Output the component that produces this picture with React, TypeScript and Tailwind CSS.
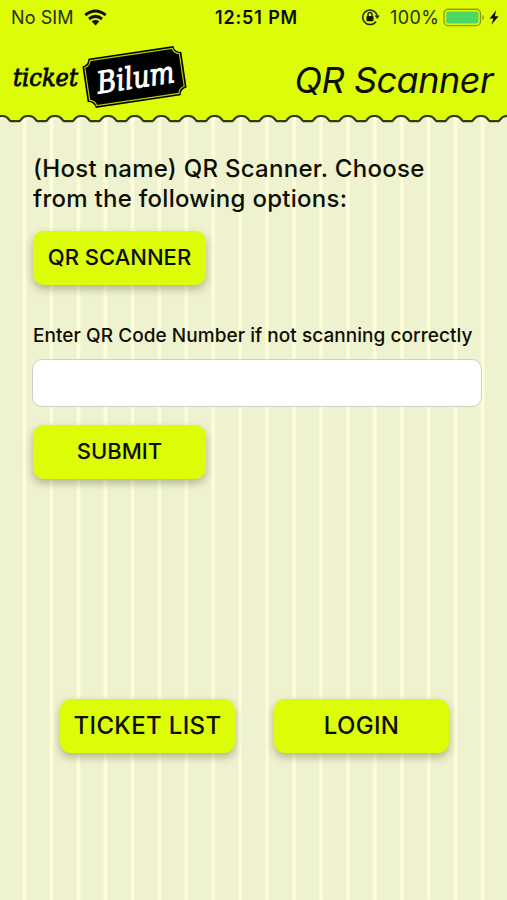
import type { ReactNode } from 'react';

const SCALLOP_START = 1.7;
const SCALLOP_STEP = 26.62;

const edgePath = Array.from({ length: 20 }, (_, i) => {
  const c = SCALLOP_START + i * SCALLOP_STEP;
  return `L${c - 9} 7.2 C${c - 6.8} 6.6 ${c - 7} 2 ${c - 1} 2 L${c + 1} 2 C${c + 7} 2 ${c + 6.8} 6.6 ${c + 9} 7.2`;
}).join(' ');

const StatusBar = () => (
  <div className="flex h-[34px] items-center pl-[11px] text-[18px] text-[#26300a]">
    <span className="w-[64px] whitespace-nowrap tracking-[0.1px]">No SIM</span>
    <svg className="ml-[9px] h-[17px] w-[23px]" viewBox="0 0 23 17" fill="none" stroke="#0c0f00" strokeWidth="3">
      <path d="M1.3 6.1 Q11.5 -2.2 21.7 6.1" />
      <path d="M5 10 Q11.5 4.8 18 10" />
      <path d="M7.7 12.4 Q11.5 9.6 15.3 12.4 L11.5 16.4 Z" fill="#0c0f00" stroke="none" />
    </svg>
    <span className="ml-[108px] w-[84px] whitespace-nowrap font-semibold tracking-[0.85px] text-[#0c0f00]">12:51 PM</span>
    <svg className="ml-[62px] h-[18px] w-[19px]" viewBox="0 0 19 18" fill="none" stroke="#26300a" strokeWidth="1.5">
      <path d="M15 13.5 A7.3 7.3 0 1 1 16.2 8" />
      <path d="M13.6 7.6 H18.8 L16.2 11 Z" fill="#26300a" stroke="none" />
      <rect x="5.5" y="8" width="7" height="5.2" rx="0.8" fill="#111600" stroke="none" />
      <path d="M7 8.4 V6.6 A2 2 0 0 1 11 6.6 V8.4" />
    </svg>
    <span className="ml-[10px] w-[50px] whitespace-nowrap tracking-[0.4px]">100%</span>
    <svg className="ml-[3px] h-[19px] w-[58px] shrink-0" viewBox="0 0 58 19">
      <rect x="1" y="1.2" width="36.5" height="16.4" rx="4.2" fill="none" stroke="#929c12" strokeWidth="1.4" />
      <rect x="3.2" y="3.4" width="32.2" height="12" rx="2" fill="#4bd763" />
      <path d="M39.5 6.6 Q42 9.4 39.5 12.2 Z" fill="#7c860c" />
      <path d="M53.2 2.2 L46.6 10.4 H50.4 L48.4 16.8 L55.6 8.2 H51.8 Z" fill="#0c0f00" />
    </svg>
  </div>
);

const Logo = () => (
  <svg className="h-[68px] w-[182px] overflow-visible" viewBox="0 0 182 68" fontFamily='"DejaVu Serif", serif' fontStyle="italic">
    <text x="5" y="43" fontSize="25" stroke="#0d0f04" strokeWidth="0.9" textLength="65" lengthAdjust="spacingAndGlyphs">ticket</text>
    <g transform="translate(126.5 34) rotate(-8.5)">
      <path
        d="M-43 -25 H43 A7 7 0 0 0 50 -18 V18 A7 7 0 0 0 43 25 H-43 A7 7 0 0 0 -50 18 V-18 A7 7 0 0 0 -43 -25 Z"
        fill="#000"
      />
      <path
        d="M-41.5 -22.8 H41.5 A8 8 0 0 0 47.8 -16.5 V16.5 A8 8 0 0 0 41.5 22.8 H-41.5 A8 8 0 0 0 -47.8 16.5 V-16.5 A8 8 0 0 0 -41.5 -22.8 Z"
        fill="none"
        stroke="#b4c808"
        strokeWidth="1.2"
      />
      <text x="-38" y="11" fill="#fff" stroke="#fff" strokeWidth="1" fontSize="30" textLength="78" lengthAdjust="spacingAndGlyphs">Bilum</text>
    </g>
  </svg>
);

const Header = () => (
  <header className="bg-[#dcfc07]">
    <StatusBar />
    <div className="flex h-[80px] items-start justify-between pl-[8px] pr-[14px]">
      <div className="pt-[9px]">
        <Logo />
      </div>
      <h1 className="mt-[24px] whitespace-nowrap text-[36px] italic leading-[44px] tracking-[-0.5px]">QR Scanner</h1>
    </div>
  </header>
);

const Button = ({ className, children }: { className: string; children: ReactNode }) => (
  <button
    className={`h-[54px] whitespace-nowrap rounded-[11px] bg-[#dcfc07] pb-[1px] font-medium shadow-[0_4px_8px_rgba(70,80,30,0.38)] ${className}`}
  >
    {children}
  </button>
);

const App = () => (
  <div className="h-[900px] w-[507px] overflow-hidden bg-[#eff2cf] bg-[repeating-linear-gradient(90deg,#eff2cf_0px,#eff2cf_22px,#fbfed8_23.5px,#fbfed8_26px,#eff2cf_26.94px)] font-['Inter','Liberation_Sans',sans-serif] text-[#0d0f04]">
    <Header />
    <svg className="block h-[10px] w-[507px]" viewBox="0 0 507 10">
      <path d={`M-10 0 L-10 7.2 ${edgePath} L520 0 Z`} fill="#dcfc07" />
      <path d={`M-10 7.2 ${edgePath}`} fill="none" stroke="#34390c" strokeWidth="2.2" />
    </svg>

    <main className="flex flex-col items-start pl-[33px] pr-[25px] pt-[30px]">
      <p className="whitespace-nowrap text-[24px] font-medium leading-[30px] tracking-[0.28px]">
        (Host name) QR Scanner. Choose
        <br />
        from the following options:
      </p>
      <Button className="mt-[17px] w-[173px] text-[22px]">QR SCANNER</Button>
      <label htmlFor="code" className="mt-[39px] whitespace-nowrap text-[19px] font-medium leading-[24px] tracking-[0.05px]">
        Enter QR Code Number if not scanning correctly
      </label>
      <input id="code" className="-ml-px mt-[11px] h-[48px] w-[450px] rounded-[10px] border border-[#cfd0c4] bg-white px-3 outline-none" />
      <Button className="mt-[18px] w-[173px] text-[22px]">SUBMIT</Button>
    </main>

    <div className="mt-[220px] flex gap-[39px] pl-[60px]">
      <Button className="w-[175px] text-[24px] tracking-[0.35px]">TICKET LIST</Button>
      <Button className="w-[175px] text-[24px] tracking-[0.35px]">LOGIN</Button>
    </div>
  </div>
);

export default App;
